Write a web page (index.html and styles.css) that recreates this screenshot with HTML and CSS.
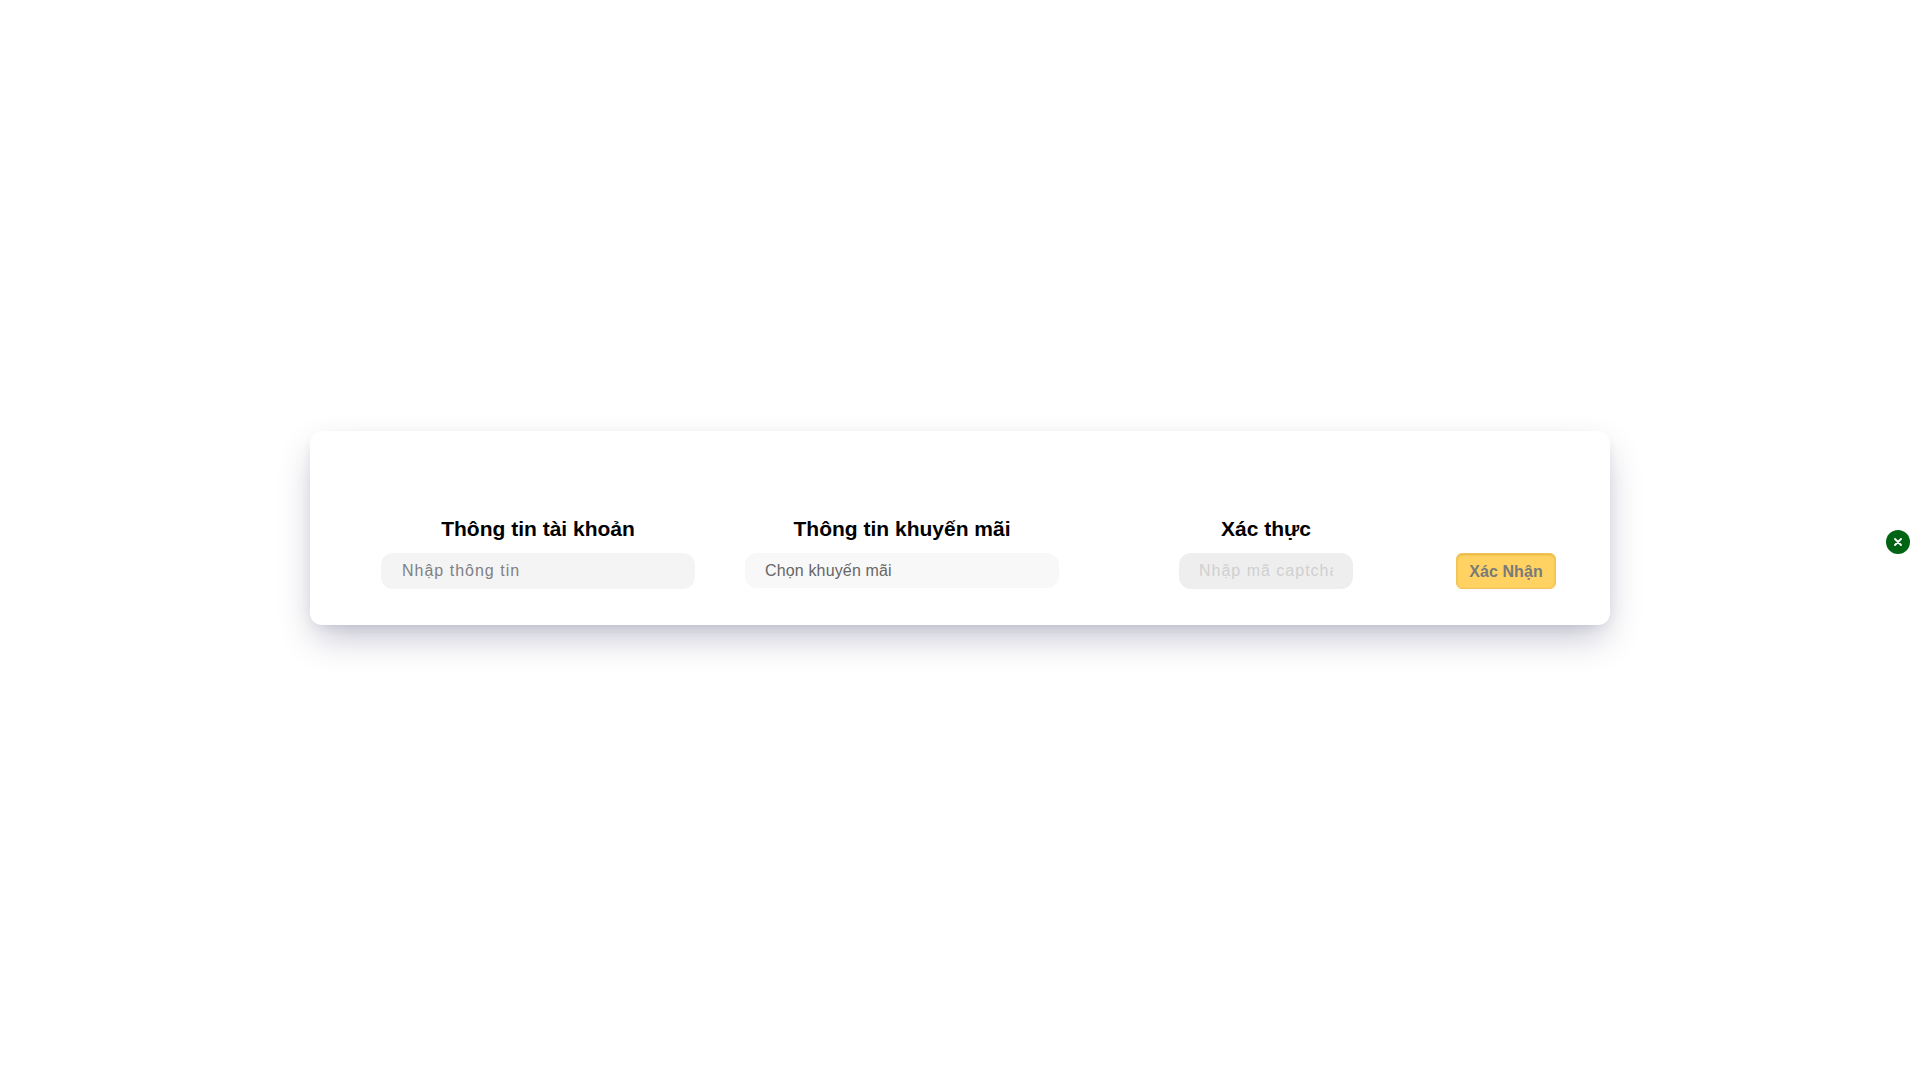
FILE: index.html
```html
<!DOCTYPE html>
<html lang="vi">
<head>
    <meta charset="UTF-8">
    <meta name="viewport" content="width=device-width, initial-scale=1.0">
    <title>Xác Nhận Khuyến Mãi</title>
    <link rel="stylesheet" href="styles.css">
</head>
<body>
    <div class="card">
        <div class="fields">
            <!-- Account -->
            <div class="field">
                <h2>Thông tin tài khoản</h2>
                <input class="text-input" type="text" placeholder="Nhập thông tin">
            </div>

            <!-- Promotion -->
            <div class="field">
                <h2>Thông tin khuyến mãi</h2>
                <select class="promo-select">
                    <option>Chọn khuyến mãi</option>
                </select>
            </div>

            <!-- Captcha -->
            <div class="field">
                <h2>Xác thực</h2>
                <input class="text-input captcha-input" type="text" placeholder="Nhập mã captcha" disabled>
            </div>
        </div>
        <button class="confirm-btn" disabled>Xác Nhận</button>
    </div>

    <button class="close-btn" aria-label="Đóng">
        <svg width="8" height="8" viewBox="0 0 8 8">
            <path d="M1 1L7 7M7 1L1 7" stroke="#fff" stroke-width="1.8" stroke-linecap="round"/>
        </svg>
    </button>
</body>
</html>
```

FILE: styles.css
```css
body {
    font-family: "Liberation Sans", Arial, sans-serif;
    background-color: #fff;
    margin: 0;
    padding: 0 0 24px;
    box-sizing: border-box;
    display: flex;
    justify-content: center;
    align-items: center;
    min-height: 100vh;
}

.card {
    width: 1300px;
    height: 194px;
    box-sizing: border-box;
    padding: 0 54px 36px 71px;
    display: flex;
    align-items: flex-end;
    background-color: #fff;
    border-radius: 12px;
    box-shadow: 0 16px 36px -6px rgba(50, 50, 93, 0.32), 0 4px 14px -6px rgba(50, 50, 93, 0.16);
}

.fields {
    display: flex;
    gap: 50px;
    margin-right: 33px;
}

.field {
    width: 314px;
    display: flex;
    flex-direction: column;
    align-items: center;
}

.field h2 {
    margin: 0 0 10px;
    font-size: 21px;
    line-height: 28px;
    font-weight: 700;
    color: #000;
}

.text-input,
.promo-select {
    box-sizing: border-box;
    width: 314px;
    border: none;
    outline: none;
    border-radius: 12px;
    padding: 0 21px;
    font-family: inherit;
    font-size: 16px;
}

.text-input {
    height: 36px;
    background-color: #f4f4f5;
    letter-spacing: 1px;
}

.text-input::placeholder {
    color: #808084;
    opacity: 1;
}

.promo-select {
    height: 35px;
    padding: 0 20px;
    appearance: none;
    background-color: #f8f8f8;
    color: #666;
    letter-spacing: 0.15px;
}

.captcha-input {
    width: 174px;
    padding: 0 20px;
    background-color: #eee;
}

.captcha-input::placeholder {
    color: #d0d0d0;
}

.confirm-btn {
    width: 100px;
    height: 36px;
    padding: 2px 0 0;
    border: 1px solid #f0c457;
    border-radius: 6px;
    background-color: #ffd262;
    box-shadow: inset 0 1px 2px rgba(190, 140, 30, 0.45);
    color: #7a7a7a;
    font-family: inherit;
    font-size: 16px;
    font-weight: 700;
    letter-spacing: 0.1px;
}

.close-btn {
    position: fixed;
    top: 529.5px;
    right: 10px;
    width: 24px;
    height: 24px;
    padding: 0;
    border: none;
    border-radius: 50%;
    background-color: #006414;
    display: flex;
    align-items: center;
    justify-content: center;
}
```
